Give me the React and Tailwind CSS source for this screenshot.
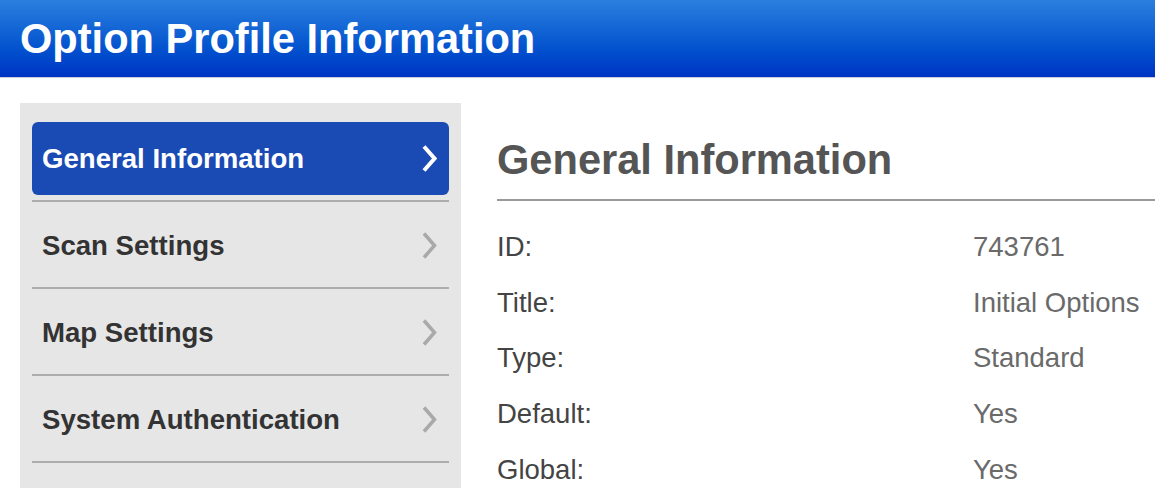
import { useState } from 'react';

const menuItems = ['General Information', 'Scan Settings', 'Map Settings', 'System Authentication'];

const details = [
    { label: 'ID:', value: '743761' },
    { label: 'Title:', value: 'Initial Options' },
    { label: 'Type:', value: 'Standard' },
    { label: 'Default:', value: 'Yes' },
    { label: 'Global:', value: 'Yes' },
];

function Chevron({ active }) {
    return (
        <svg width="16" height="29" viewBox="0 0 16 29" fill="none" className="shrink-0">
            <polyline
                points="3,2.5 13.5,14.5 3,26.5"
                stroke={active ? '#ffffff' : '#a9a9a9'}
                strokeWidth={active ? '4' : '3.5'}
                strokeLinejoin="miter"
            />
        </svg>
    );
}

function App() {
    const [active, setActive] = useState(0);

    return (
        <div className="min-h-screen bg-white font-['Liberation_Sans',Arial,sans-serif]">
            <div className="h-[78px] flex items-center pl-5 bg-gradient-to-b from-[#2a7fde] to-[#0032c4] border-b border-[#c9ccd2]">
                <h1 className="text-white font-bold text-[41.6px] leading-none">Option Profile Information</h1>
            </div>

            <div className="flex mt-[25px]">
                <ul className="ml-5 w-[441px] shrink-0 bg-[#e6e6e6] px-3 pt-[12px] pb-10">
                    {menuItems.map((item, i) => (
                        <li key={item} className="pt-[7px] pb-[5px] border-b-2 border-[#adadad]">
                            <div
                                onClick={() => setActive(i)}
                                className={`h-[73px] flex items-center justify-between pl-[10px] pr-[12px] rounded-md cursor-pointer ${
                                    active == i ? 'bg-[#1a4ab4] text-white' : 'text-[#333333]'
                                }`}
                            >
                                <span className="text-[27.6px] font-bold">{item}</span>
                                <Chevron active={active == i} />
                            </div>
                        </li>
                    ))}
                </ul>

                <div className="flex-1 ml-[36px] pt-[36px]">
                    <h2 className="text-[41.6px] leading-[42px] font-bold text-[#555555] pb-[18px] border-b-2 border-[#9a9a9a]">
                        {menuItems[active]}
                    </h2>
                    <div className="mt-[18px]">
                        {details.map((row) => (
                            <div key={row.label} className="flex text-[27.5px] leading-[55.7px]">
                                <span className="w-[476px] text-[#444444]">{row.label}</span>
                                <span className="text-[#6a6a6a]">{row.value}</span>
                            </div>
                        ))}
                    </div>
                </div>
            </div>
        </div>
    );
}

export default App;
